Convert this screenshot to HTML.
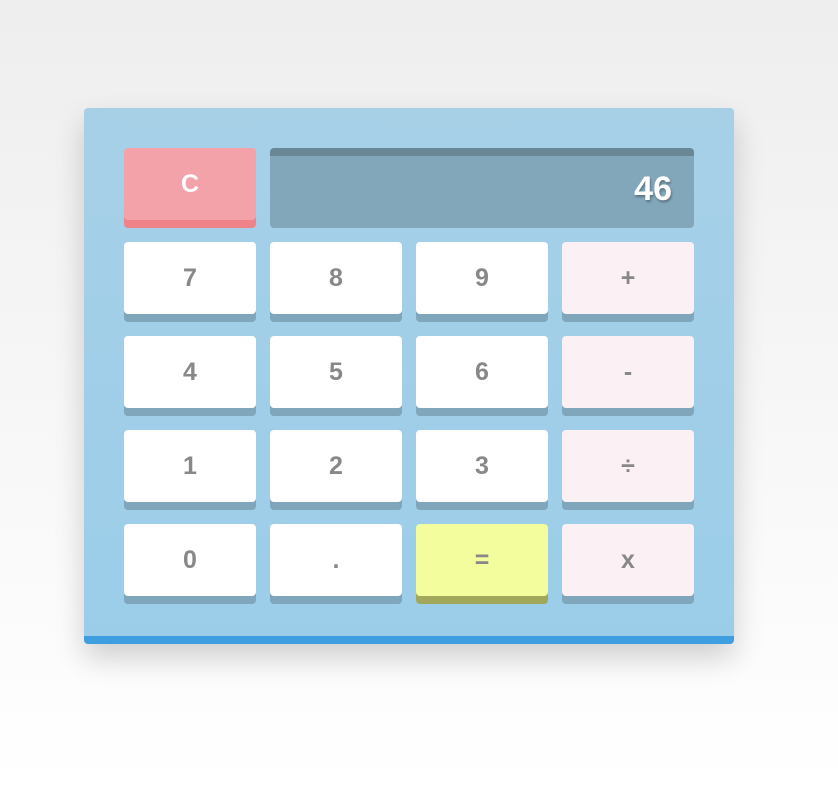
<!DOCTYPE html>
<html><head><style>
html,body{margin:0;width:838px;height:790px;overflow:hidden;background:linear-gradient(#eeeeee,#ffffff);font-family:"Liberation Sans",Arial,sans-serif}
.calc{position:absolute;left:84px;top:108px;width:650px;height:528px;background:linear-gradient(#a7d0e7,#9bcde9);border-radius:4px;border-bottom:8px solid #3f9ee0;box-shadow:0 14px 30px rgba(0,0,0,.18)}
.b{position:absolute;width:132px;height:72px;border-radius:4px;background:#fff;box-shadow:0 8px 0 #7fa6ba;color:#888;font-weight:bold;font-size:25px;text-align:center;line-height:72px}
.op{background:#fbf0f4}
.eq{background:#f3fd9d;box-shadow:0 8px 0 #a1a85c}
.c{background:#f4a2a9;box-shadow:0 8px 0 #ee8389;color:#fff;line-height:72px}
.disp{position:absolute;left:186px;top:40px;width:424px;height:80px;border-radius:4px;background:#82a6ba;border-top:8px solid #6a8795;box-sizing:border-box;color:#fff;font-weight:bold;font-size:34px;text-align:right;padding-right:22px;line-height:66px;text-shadow:1px 2px 2px rgba(0,0,0,.3)}
</style></head><body>
<div class="calc">
<div class="b c" style="left:40px;top:40px">C</div>
<div class="disp">46</div>
<div class="b" style="left:40px;top:134px">7</div>
<div class="b" style="left:186px;top:134px">8</div>
<div class="b" style="left:332px;top:134px">9</div>
<div class="b op" style="left:478px;top:134px">+</div>
<div class="b" style="left:40px;top:228px">4</div>
<div class="b" style="left:186px;top:228px">5</div>
<div class="b" style="left:332px;top:228px">6</div>
<div class="b op" style="left:478px;top:228px">-</div>
<div class="b" style="left:40px;top:322px">1</div>
<div class="b" style="left:186px;top:322px">2</div>
<div class="b" style="left:332px;top:322px">3</div>
<div class="b op" style="left:478px;top:322px">÷</div>
<div class="b" style="left:40px;top:416px">0</div>
<div class="b" style="left:186px;top:416px">.</div>
<div class="b eq" style="left:332px;top:416px">=</div>
<div class="b op" style="left:478px;top:416px">x</div>
</div>
</body></html>
